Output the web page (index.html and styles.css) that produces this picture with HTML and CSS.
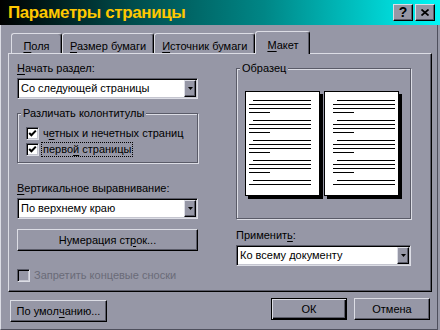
FILE: index.html
```html
<!DOCTYPE html>
<html lang="ru">

<head>
  <meta charset="UTF-8">
  <title>Параметры страницы</title>
  <link rel="stylesheet" href="styles.css">
</head>

<body>
  <div class="dialog">
    <div class="titlebar">
      <span class="title">Параметры страницы</span>
      <div class="caption-buttons">
        <span class="caption-btn">?</span>
        <span class="caption-btn">
          <svg width="8" height="7" viewBox="0 0 8 7"><path d="M0.5 0.5 L7.5 6.5 M7.5 0.5 L0.5 6.5" stroke="#000" stroke-width="1.7" fill="none"/></svg>
        </span>
      </div>
    </div>

    <div class="frame">
      <div class="tabs">
        <div class="tab"><u>П</u>оля</div>
        <div class="tab"><u>Р</u>азмер бумаги</div>
        <div class="tab"><u>И</u>сточник бумаги</div>
        <div class="tab active"><u>М</u>акет</div>
      </div>

      <div class="panel">
        <div class="col left-col">
          <div class="label"><u>Н</u>ачать раздел:</div>
          <div class="combo">
            <span class="combo-text">Со следующей страницы</span>
            <span class="combo-btn"><svg width="5" height="3" viewBox="0 0 5 3"><path d="M0 0 H5 L2.5 3 Z" fill="#000"/></svg></span>
          </div>

          <div class="group headers">
            <span class="group-title">Различать колонтитулы</span>
            <div class="check-row">
              <span class="checkbox"><svg width="9" height="9" viewBox="0 0 9 9"><path d="M1.2 4 L3.4 6.3 L7.8 1.6" stroke="#000" stroke-width="2" fill="none"/></svg></span>
              <span class="check-label">ч<u>е</u>тных и нечетных страниц</span>
            </div>
            <div class="check-row">
              <span class="checkbox"><svg width="9" height="9" viewBox="0 0 9 9"><path d="M1.2 4 L3.4 6.3 L7.8 1.6" stroke="#000" stroke-width="2" fill="none"/></svg></span>
              <span class="check-label focused">перво<u>й</u> страницы</span>
            </div>
          </div>

          <div class="label spaced"><u>В</u>ертикальное выравнивание:</div>
          <div class="combo">
            <span class="combo-text">По верхнему краю</span>
            <span class="combo-btn"><svg width="5" height="3" viewBox="0 0 5 3"><path d="M0 0 H5 L2.5 3 Z" fill="#000"/></svg></span>
          </div>

          <div class="btn numbering">Нумерация ст<u>р</u>ок...</div>

          <div class="check-row disabled">
            <span class="checkbox"></span>
            <span class="check-label">Запретить концевые сноски</span>
          </div>
        </div>

        <div class="col right-col">
          <div class="group preview">
            <span class="group-title">Образец</span>
            <div class="pages">
              <div class="page page-left">
                <div class="para"><i class="ln indent"></i><i class="ln"></i><i class="ln"></i><i class="ln short"></i></div>
                <div class="para"><i class="ln indent"></i><i class="ln"></i><i class="ln"></i><i class="ln short"></i></div>
                <div class="para"><i class="ln indent"></i><i class="ln"></i><i class="ln"></i><i class="ln short"></i></div>
                <div class="para"><i class="ln indent"></i><i class="ln"></i><i class="ln"></i><i class="ln short"></i></div>
                <div class="para"><i class="ln indent"></i><i class="ln"></i></div>
              </div>
              <div class="page page-right">
                <div class="para"><i class="ln indent"></i><i class="ln"></i><i class="ln"></i><i class="ln short"></i></div>
                <div class="para"><i class="ln indent"></i><i class="ln"></i><i class="ln"></i><i class="ln short"></i></div>
                <div class="para"><i class="ln indent"></i><i class="ln"></i><i class="ln"></i><i class="ln short"></i></div>
                <div class="para"><i class="ln indent"></i><i class="ln"></i><i class="ln"></i><i class="ln short"></i></div>
                <div class="para"><i class="ln indent"></i><i class="ln"></i></div>
              </div>
            </div>
          </div>

          <div class="label apply">Применит<u>ь</u>:</div>
          <div class="combo">
            <span class="combo-text">Ко всему документу</span>
            <span class="combo-btn"><svg width="5" height="3" viewBox="0 0 5 3"><path d="M0 0 H5 L2.5 3 Z" fill="#000"/></svg></span>
          </div>
        </div>
      </div>

      <div class="footer">
        <div class="btn default-btn">По умол<u>ч</u>анию...</div>
        <div class="spacer"></div>
        <div class="btn ok">ОК</div>
        <div class="btn cancel">Отмена</div>
      </div>
    </div>
  </div>
</body>

</html>
```

FILE: styles.css
```css
body {
  margin: 0;
  background: #9697a6;
  font-family: "Liberation Sans", Arial, sans-serif;
  font-size: 11px;
  line-height: 13px;
  color: #000;
}

u {
  text-underline-offset: 2px;
}

.dialog {
  width: 440px;
  height: 330px;
  overflow: hidden;
  display: flex;
  flex-direction: column;
}

/* title bar */

.titlebar {
  height: 25px;
  flex: none;
  display: flex;
  align-items: center;
  padding: 0 5px 0 8px;
  background: linear-gradient(90deg, #000 0%, #004c4c 30%, #008686 60%, #00f6f6 100%);
}

.titlebar .title {
  color: #ffc800;
  font-size: 17px;
  font-weight: bold;
  letter-spacing: -0.4px;
  line-height: 25px;
}

.caption-buttons {
  margin-left: auto;
  display: flex;
  gap: 2px;
}

.caption-btn {
  width: 20px;
  height: 17px;
  box-sizing: border-box;
  display: flex;
  align-items: center;
  justify-content: center;
  background: #9697a6;
  border: 1px solid;
  border-color: #dcdde5 #000 #000 #dcdde5;
  box-shadow: inset -1px -1px 0 #5a5b68;
  font-size: 14px;
  font-weight: bold;
}

/* window body */

.frame {
  flex: 1;
  width: 438px;
  box-sizing: border-box;
  border-left: 1px solid #dcdde5;
  border-right: 1px solid #4e4f5c;
  border-bottom: 1px solid #4e4f5c;
  padding: 6px 5px 0 7px;
}

.tabs {
  height: 22px;
  display: flex;
  align-items: flex-end;
  padding-left: 3px;
}

.tab {
  height: 20px;
  min-width: 51px;
  box-sizing: border-box;
  padding: 6px 7px 0;
  text-align: center;
  border: 1px solid;
  border-bottom: none;
  border-color: #dcdde5 #000 transparent #dcdde5;
  border-radius: 3px 3px 0 0;
  box-shadow: inset -1px 0 0 #5a5b68;
}

.tab.active {
  position: relative;
  z-index: 1;
  height: 23px;
  min-width: 55px;
  margin-bottom: -1px;
  padding-top: 7px;
  background: #9697a6;
}

.panel {
  height: 239px;
  box-sizing: border-box;
  display: flex;
  gap: 38px;
  padding: 8px 0 0 8px;
  border: 1px solid;
  border-color: #dcdde5 #000 #000 #dcdde5;
  box-shadow: inset -1px -1px 0 #5a5b68;
}

.col {
  display: flex;
  flex-direction: column;
}

.left-col {
  width: 181px;
}

.right-col {
  width: 175px;
}

.label {
  margin-bottom: 3px;
}

.label.spaced {
  margin-top: 19px;
}

.label.apply {
  margin-top: 10px;
}

/* combo box */

.combo {
  height: 21px;
  box-sizing: border-box;
  display: flex;
  align-items: center;
  background: #fff;
  border: 1px solid;
  border-color: #5a5b68 #dcdde5 #dcdde5 #5a5b68;
  box-shadow: inset 1px 1px 0 #000, inset -1px -1px 0 #c4c5cf;
  padding: 1px 1px 1px 3px;
}

.combo-text {
  flex: 1;
}

.combo-btn {
  width: 12px;
  height: 17px;
  box-sizing: border-box;
  display: flex;
  align-items: center;
  justify-content: center;
  background: #9697a6;
  border: 1px solid;
  border-color: #dcdde5 #000 #000 #dcdde5;
  box-shadow: inset -1px -1px 0 #5a5b68;
}

/* group boxes */

.group {
  display: flex;
  flex-direction: column;
  box-sizing: border-box;
  border: 1px solid #5a5b68;
  box-shadow: inset 1px 1px 0 #dcdde5, 1px 1px 0 #dcdde5;
}

.group-title {
  align-self: flex-start;
  margin: -7px 0 0 3px;
  padding: 0 2px;
  background: #9697a6;
}

.headers {
  margin-top: 14px;
  padding-bottom: 5px;
  gap: 1px;
}

.headers .group-title {
  margin-bottom: 5px;
}

.headers .check-row {
  margin-left: 8px;
}

.check-row {
  display: flex;
  align-items: center;
}

.checkbox {
  width: 13px;
  height: 13px;
  box-sizing: border-box;
  display: flex;
  align-items: center;
  justify-content: center;
  background: #fff;
  border: 1px solid;
  border-color: #5a5b68 #dcdde5 #dcdde5 #5a5b68;
  box-shadow: inset 1px 1px 0 #000, inset -1px -1px 0 #c4c5cf;
}

.check-label {
  margin-left: 2px;
  padding: 0 1px;
  border: 1px dotted transparent;
}

.check-label.focused {
  border-color: #000;
}

.check-row.disabled {
  margin-top: 17px;
  color: #6a6b78;
}

.check-row.disabled .checkbox {
  background: #9697a6;
}

/* buttons */

.btn {
  height: 22px;
  box-sizing: border-box;
  display: flex;
  align-items: center;
  justify-content: center;
  background: #9697a6;
  border: 1px solid;
  border-color: #dcdde5 #000 #000 #dcdde5;
  box-shadow: inset -1px -1px 0 #5a5b68;
}

.numbering {
  margin-top: 10px;
}

/* preview */

.preview {
  margin-top: 6px;
  height: 151px;
}

.pages {
  display: flex;
  gap: 4px;
  margin-top: 16px;
  padding-left: 8px;
}

.page {
  width: 75px;
  height: 105px;
  box-sizing: border-box;
  display: flex;
  flex-direction: column;
  gap: 7px;
  background: #fff;
  border: 1px solid #000;
  box-shadow: 3px 3px 0 #000;
}

.page-left {
  padding: 8px 8px 0 3px;
}

.page-right {
  padding: 8px 3px 0 8px;
}

.para {
  display: flex;
  flex-direction: column;
  gap: 3px;
}

.ln {
  display: block;
  height: 1px;
  background: #000;
}

.ln.indent {
  margin-left: 4px;
}

.ln.short {
  width: 21px;
}

/* footer */

.footer {
  display: flex;
  gap: 7px;
  margin-top: 6px;
  padding: 0 2px;
}

.spacer {
  flex: 1;
}

.default-btn {
  width: 97px;
  margin-top: 2px;
}

.ok,
.cancel {
  width: 76px;
}

.ok {
  border-color: #000;
  box-shadow: inset 1px 1px 0 #dcdde5, inset -1px -1px 0 #000, inset -2px -2px 0 #5a5b68;
}
```
